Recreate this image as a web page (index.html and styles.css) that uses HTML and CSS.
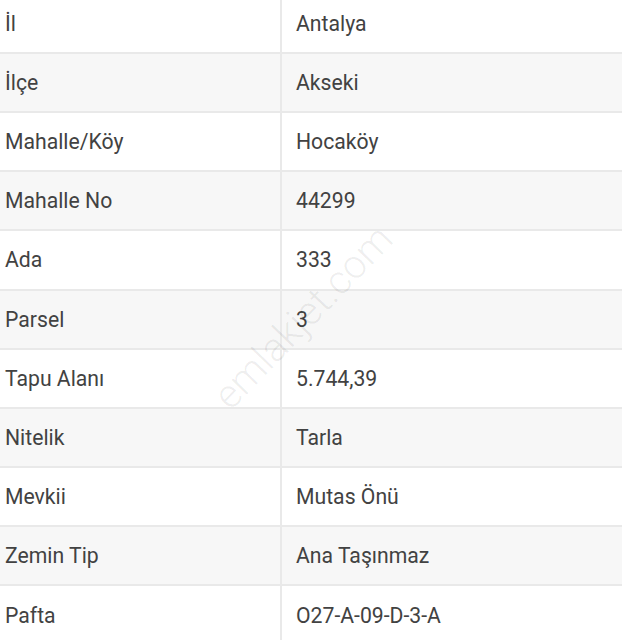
FILE: index.html
```html
<!DOCTYPE html>
<html lang="tr">
<head>
<meta charset="utf-8">
<link rel="stylesheet" href="styles.css">
</head>
<body>
<div class="sheet">
  <div class="table">
    <div class="row"><div class="key">İl</div><div class="val">Antalya</div></div>
    <div class="row alt"><div class="key">İlçe</div><div class="val">Akseki</div></div>
    <div class="row"><div class="key">Mahalle/Köy</div><div class="val">Hocaköy</div></div>
    <div class="row alt"><div class="key">Mahalle No</div><div class="val">44299</div></div>
    <div class="row"><div class="key">Ada</div><div class="val">333</div></div>
    <div class="row alt"><div class="key">Parsel</div><div class="val">3</div></div>
    <div class="row"><div class="key">Tapu Alanı</div><div class="val">5.744,39</div></div>
    <div class="row alt"><div class="key">Nitelik</div><div class="val">Tarla</div></div>
    <div class="row"><div class="key">Mevkii</div><div class="val">Mutas Önü</div></div>
    <div class="row alt"><div class="key">Zemin Tip</div><div class="val">Ana Taşınmaz</div></div>
    <div class="row"><div class="key">Pafta</div><div class="val">O27-A-09-D-3-A</div></div>
  </div>
  <div class="watermark">emlakjet.com</div>
</div>
</body>
</html>
```

FILE: styles.css
```css
html, body {
  margin: 0;
  padding: 0;
  background: #ffffff;
}
body {
  width: 622px;
  height: 640px;
  overflow: hidden;
  font-family: Roboto, "Noto Sans", "Liberation Sans", sans-serif;
}
.sheet {
  position: relative;
  width: 622px;
  height: 640px;
  overflow: hidden;
}
.table {
  display: flex;
  flex-direction: column;
  margin-top: -5.4px;
}
.row {
  display: grid;
  grid-template-columns: 282px 1fr;
  height: 59.2px;
  box-sizing: border-box;
  border-bottom: 2px solid #e9e9e9;
  background: #ffffff;
  color: #424242;
  font-size: 21.2px;
}
.row.alt {
  background: #f7f7f7;
}
.key, .val {
  display: flex;
  align-items: center;
}
.key {
  padding-left: 5px;
  border-right: 2px solid #e9e9e9;
}
.val {
  padding-left: 14px;
}
.watermark {
  position: absolute;
  left: 303px;
  top: 317px;
  transform: translate(-50%, -50%) rotate(-46deg);
  font-size: 40px;
  font-weight: 300;
  color: rgba(0, 0, 0, 0.07);
  white-space: nowrap;
  pointer-events: none;
}
```
